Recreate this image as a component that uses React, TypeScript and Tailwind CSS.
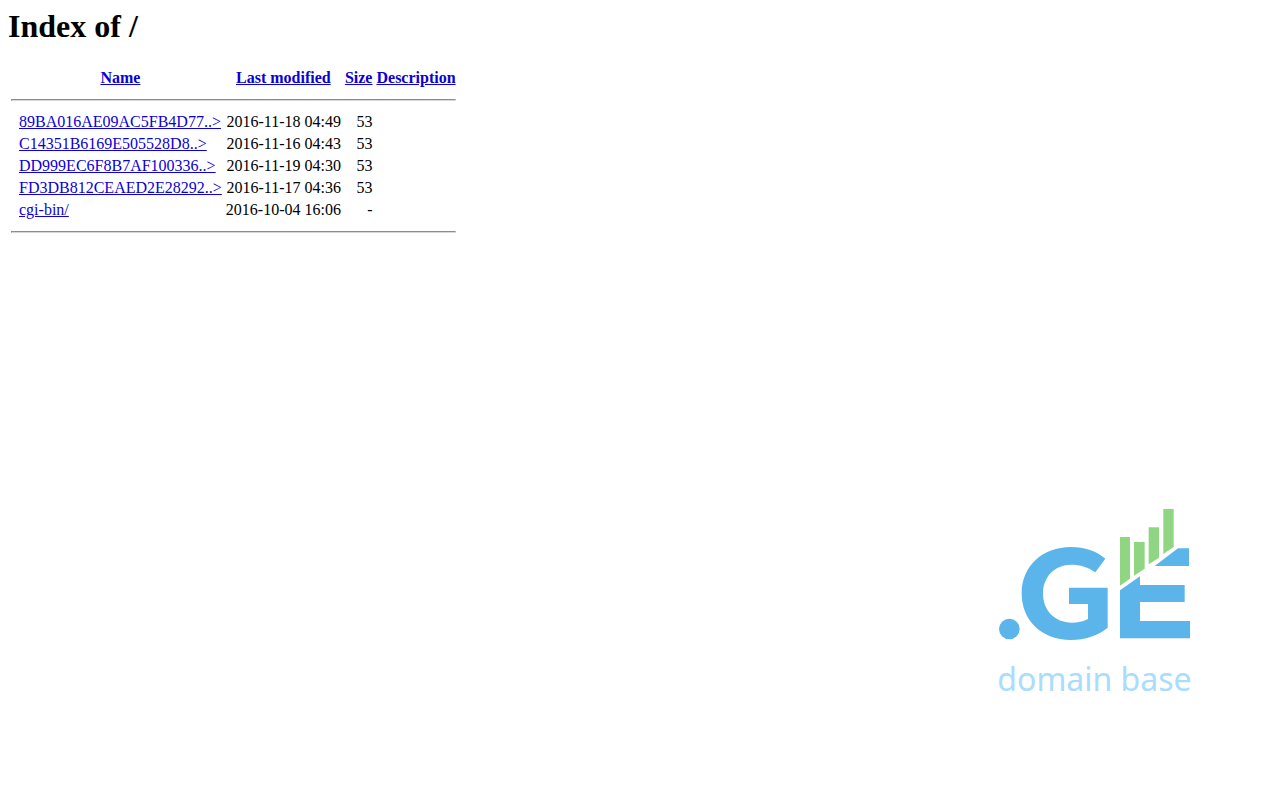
type Entry = {
	name: string;
	href: string;
	modified: string;
	size: string;
};

const entries: Entry[] = [
	{ name: "89BA016AE09AC5FB4D77..>", href: "#89BA016AE09AC5FB4D77", modified: "2016-11-18 04:49", size: "53" },
	{ name: "C14351B6169E505528D8..>", href: "#C14351B6169E505528D8", modified: "2016-11-16 04:43", size: "53" },
	{ name: "DD999EC6F8B7AF100336..>", href: "#DD999EC6F8B7AF100336", modified: "2016-11-19 04:30", size: "53" },
	{ name: "FD3DB812CEAED2E28292..>", href: "#FD3DB812CEAED2E28292", modified: "2016-11-17 04:36", size: "53" },
	{ name: "cgi-bin/", href: "#cgi-bin", modified: "2016-10-04 16:06", size: "-" },
];

const columns = [
	{ label: "Name", href: "#name" },
	{ label: "Last modified", href: "#modified" },
	{ label: "Size", href: "#size" },
	{ label: "Description", href: "#description" },
];

function Rule() {
	return (
		<tr>
			<td colSpan={5} className="p-px">
				<hr className="my-2 border border-t-[#8c8c8c] border-r-[#e0e0e0] border-b-[#d8d8d8] border-l-[#8c8c8c]" />
			</td>
		</tr>
	);
}

function Logo() {
	return (
		<div className="flex w-[197px] flex-col gap-[19px]">
			<svg viewBox="33 24 591 396" className="h-[132px] w-full" role="img" aria-label=".GE">
				<g fill="#5bb5ea">
					<circle cx="73" cy="387" r="31" />
					<path d="M361 176C333 153 300 141 258 141C172 141 110 199 110 280C110 362 170 420 258 420C300 420 340 406 368 383V263H252V312H309V357C294 365 278 368 260 368C210 368 174 332 174 280C174 230 210 194 258 194C286 194 310 202 331 217Z" />
					<path d="M405 271L465 229V255H599V306H465V363H615V415H405Z" />
					<path d="M509 198L579 145H612V198Z" />
				</g>
				<g fill="#90d581">
					<path d="M405 111H435V236L405 257Z" />
					<path d="M447 126H479V206L447 227Z" />
					<path d="M491 82H522V173L491 193Z" />
					<path d="M535 27H566V141L535 162Z" />
				</g>
			</svg>
			<p className="text-center font-['Noto_Sans',sans-serif] text-[32px] leading-10 whitespace-nowrap text-[#a9dcfd]">
				domain base
			</p>
		</div>
	);
}

export default function App() {
	return (
		<main className="flex min-h-screen flex-col bg-white p-2 font-['Liberation_Serif',serif] text-base leading-[18px] text-black">
			<h1 className="mb-[21px] text-[32px] leading-[37px] font-bold">Index of /</h1>

			<table className="border-separate border-spacing-0.5 self-start whitespace-nowrap">
				<thead>
					<tr>
						<th className="p-px">&nbsp;</th>
						{columns.map((column) => (
							<th key={column.label} className="p-px text-center font-bold">
								<a href={column.href} className="text-[#0b00d8] underline">
									{column.label}
								</a>
							</th>
						))}
					</tr>
				</thead>
				<tbody>
					<Rule />
					{entries.map((entry) => (
						<tr key={entry.name}>
							<td className="p-px">&nbsp;</td>
							<td className="p-px">
								<a href={entry.href} className="text-[#0b00d8] underline">
									{entry.name}
								</a>
							</td>
							<td className="p-px text-right">{entry.modified}</td>
							<td className="p-px text-right">{entry.size}</td>
							<td className="p-px">&nbsp;</td>
						</tr>
					))}
					<Rule />
				</tbody>
			</table>

			<footer className="mt-auto flex justify-end pr-[79px] pb-[93px]">
				<Logo />
			</footer>
		</main>
	);
}
